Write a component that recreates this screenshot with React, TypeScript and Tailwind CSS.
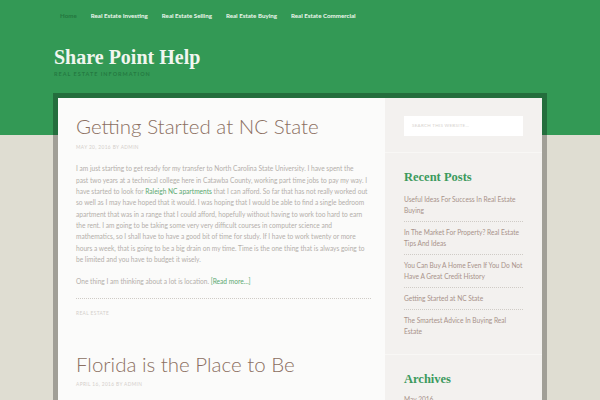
const navItems = [
  'Real Estate Investing',
  'Real Estate Selling',
  'Real Estate Buying',
  'Real Estate Commercial',
]

const recentPosts = [
  ['Useful Ideas For Success In Real Estate', 'Buying'],
  ['In The Market For Property? Real Estate', 'Tips And Ideas'],
  ['You Can Buy A Home Even If You Do Not', 'Have A Great Credit History'],
  ['Getting Started at NC State'],
  ['The Smartest Advice In Buying Real', 'Estate'],
]

const lato = "font-['Lato','Liberation_Sans',sans-serif]"
const serif = "font-['Liberation_Serif','DejaVu_Serif',serif]"

export default function App() {
  return (
    <div
      className={`w-[600px] h-[400px] overflow-hidden bg-[linear-gradient(#339955_135px,#dfddd2_135px)] ${lato}`}
    >
      {/* nav */}
      <nav className="flex items-center gap-[14px] pl-[60px] h-[31px] text-[6.2px] font-bold">
        <span className="text-[#23773f]">Home</span>
        {navItems.map((item) => (
          <span key={item} className="text-[#eef7ee]">
            {item}
          </span>
        ))}
      </nav>

      {/* site title */}
      <header className="pl-[54px] pt-[14px]">
        <h1 className={`${serif} font-bold text-[20px] leading-[24px] text-[#f1f6ef]`}>Share Point Help</h1>
        <p className="mt-[1px] text-[5.5px] tracking-[0.18em] text-[#257a42] font-bold">REAL ESTATE INFORMATION</p>
      </header>

      {/* content box */}
      <div className="mt-[15px] ml-[53px] w-[494px] border-[5px] border-b-0 border-black/[0.28] flex h-[320px]">
        <main className="w-[327px] bg-[#fbfbfa] pl-[18px] pr-[14px] pt-[14px]">
          <h2 className="text-[20.5px] leading-[28px] font-light text-[#8b6f61]">Getting Started at NC State</h2>
          <p className="mt-[4px] text-[4.8px] tracking-[0.08em] text-[#d4cfca]">MAY 20, 2016 BY ADMIN</p>
          <p className="mt-[12px] text-[6.6px] leading-[11.3px] text-[#b4afaa] whitespace-nowrap">
            I am just starting to get ready for my transfer to North Carolina State University. I have spent the
            <br />
            past two years at a technical college here in Catawba County, working part time jobs to pay my way. I
            <br />
            have started to look for <span className="text-[#5aa870]">Raleigh NC apartments</span> that I can afford. So
            far that has not really worked out
            <br />
            so well as I may have hoped that it would. I was hoping that I would be able to find a single bedroom
            <br />
            apartment that was in a range that I could afford, hopefully without having to work too hard to earn
            <br />
            the rent. I am going to be taking some very very difficult courses in computer science and
            <br />
            mathematics, so I shall have to have a good bit of time for study. If I have to work twenty or more
            <br />
            hours a week, that is going to be a big drain on my time. Time is the one thing that is always going to
            <br />
            be limited and you have to budget it wisely.
          </p>
          <p className="mt-[11px] text-[6.6px] leading-[11.3px] text-[#b4afaa]">
            One thing I am thinking about a lot is location. <span className="text-[#5aa870]">[Read more…]</span>
          </p>
          <div className="mt-[11px] border-t border-dotted border-[#cfcbc6]" />
          <p className="mt-[11px] text-[4.8px] tracking-[0.08em] text-[#d4cfca]">REAL ESTATE</p>

          <h2 className="mt-[32px] text-[20.5px] leading-[28px] font-light text-[#8b6f61]">Florida is the Place to Be</h2>
          <p className="mt-[3px] text-[4.8px] tracking-[0.08em] text-[#d4cfca]">APRIL 16, 2016 BY ADMIN</p>
        </main>

        <aside className="flex-1 bg-[#f3f1ef]">
          <div className="px-[19px] pt-[18px] pb-[16px] border-b border-[#f8f7f5]">
            <div className="h-[20px] bg-white flex items-center px-[8px] text-[4.5px] tracking-[0.06em] text-[#d6d2ce]">
              SEARCH THIS WEBSITE…
            </div>
          </div>

          <div className="px-[19px] pt-[16px] pb-[17px] border-b border-[#f8f7f5]">
            <h3 className={`${serif} font-bold text-[12.5px] leading-[16px] text-[#3c9a5d]`}>Recent Posts</h3>
            <ul className="mt-[9px]">
              {recentPosts.map((lines, i) => (
                <li
                  key={i}
                  className={`text-[6.6px] leading-[11px] text-[#a8928a] ${
                    i < recentPosts.length - 1 ? 'pb-[5px] mb-[5px] border-b border-dotted border-[#cfcbc6]' : ''
                  }`}
                >
                  {lines.map((l, j) => (
                    <div key={j}>{l}</div>
                  ))}
                </li>
              ))}
            </ul>
          </div>

          <div className="px-[19px] pt-[16px]">
            <h3 className={`${serif} font-bold text-[12.5px] leading-[16px] text-[#3c9a5d]`}>Archives</h3>
            <p className="mt-[7px] text-[6.6px] leading-[11px] text-[#a8928a]">May 2016</p>
          </div>
        </aside>
      </div>
    </div>
  )
}
